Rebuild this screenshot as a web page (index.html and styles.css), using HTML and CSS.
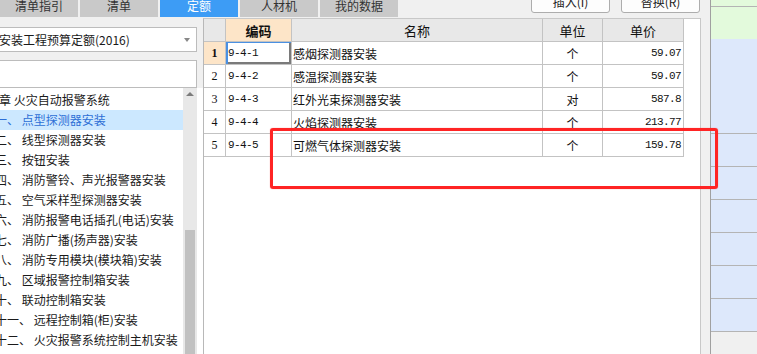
FILE: index.html
```html
<!DOCTYPE html>
<html lang="zh-CN">
<head>
    <meta charset="UTF-8">
    <meta name="viewport" content="width=device-width, initial-scale=1.0">
    <title>定额查询</title>
    <link rel="stylesheet" href="styles.css">
</head>
<body>
    <div class="app">
        <div class="main">
            <div class="topbar">
                <div class="tabs">
                    <div class="tab">清单指引</div>
                    <div class="tab">清单</div>
                    <div class="tab active">定额</div>
                    <div class="tab">人材机</div>
                    <div class="tab">我的数据</div>
                </div>
                <div class="actions">
                    <button class="btn">插入(I)</button>
                    <button class="btn">替换(R)</button>
                </div>
            </div>

            <div class="content">
                <div class="left">
                    <div class="select">
                        <span class="select-text">安装工程预算定额(2016)</span>
                        <span class="caret"></span>
                    </div>
                    <div class="search"></div>
                    <div class="tree">
                        <ul class="tree-list">
                            <li class="node chapter">第四章 火灾自动报警系统</li>
                            <li class="node active">一、 点型探测器安装</li>
                            <li class="node">二、 线型探测器安装</li>
                            <li class="node">三、 按钮安装</li>
                            <li class="node">四、 消防警铃、声光报警器安装</li>
                            <li class="node">五、 空气采样型探测器安装</li>
                            <li class="node">六、 消防报警电话插孔(电话)安装</li>
                            <li class="node">七、 消防广播(扬声器)安装</li>
                            <li class="node">八、 消防专用模块(模块箱)安装</li>
                            <li class="node">九、 区域报警控制箱安装</li>
                            <li class="node">十、 联动控制箱安装</li>
                            <li class="node">十一、 远程控制箱(柜)安装</li>
                            <li class="node">十二、 火灾报警系统控制主机安装</li>
                        </ul>
                        <div class="scrollbar">
                            <span class="arrow-up"></span>
                            <span class="thumb"></span>
                        </div>
                    </div>
                </div>

                <div class="grid-panel">
                    <div class="grid">
                        <div class="cell head corner"></div>
                        <div class="cell head code-head">编码</div>
                        <div class="cell head">名称</div>
                        <div class="cell head">单位</div>
                        <div class="cell head">单价</div>

                        <div class="cell num current">1</div>
                        <div class="cell code selected">9-4-1</div>
                        <div class="cell name">感烟探测器安装</div>
                        <div class="cell unit">个</div>
                        <div class="cell price">59.07</div>

                        <div class="cell num">2</div>
                        <div class="cell code">9-4-2</div>
                        <div class="cell name">感温探测器安装</div>
                        <div class="cell unit">个</div>
                        <div class="cell price">59.07</div>

                        <div class="cell num">3</div>
                        <div class="cell code">9-4-3</div>
                        <div class="cell name">红外光束探测器安装</div>
                        <div class="cell unit">对</div>
                        <div class="cell price">587.8</div>

                        <div class="cell num">4</div>
                        <div class="cell code">9-4-4</div>
                        <div class="cell name">火焰探测器安装</div>
                        <div class="cell unit">个</div>
                        <div class="cell price">213.77</div>

                        <div class="cell num">5</div>
                        <div class="cell code">9-4-5</div>
                        <div class="cell name">可燃气体探测器安装</div>
                        <div class="cell unit">个</div>
                        <div class="cell price">159.78</div>
                    </div>
                </div>
            </div>
        </div>

        <div class="side">
            <div class="side-row green thin"></div>
            <div class="side-row green top"></div>
            <div class="side-row blue first"></div>
            <div class="side-row blue"></div>
            <div class="side-row blue"></div>
            <div class="side-row blue"></div>
            <div class="side-row blue"></div>
            <div class="side-row blue"></div>
            <div class="side-row blue"></div>
        </div>

        <div class="mark"></div>
    </div>
</body>
</html>
```

FILE: styles.css
```css
* {
    box-sizing: border-box;
}

body {
    margin: 0;
    font-family: "Noto Sans CJK SC", "Noto Sans", sans-serif;
    font-size: 12px;
    color: #1a1a1a;
    background-color: #f0f0f0;
    overflow: hidden;
}

.app {
    position: relative;
    display: flex;
    width: 757px;
    height: 354px;
    overflow: hidden;
}

.main {
    width: 710px;
    padding-right: 9px;
    display: flex;
    flex-direction: column;
}

/* top tabs */
.topbar {
    height: 18px;
    display: flex;
    justify-content: space-between;
}

.tabs {
    display: flex;
    gap: 2px;
    margin-top: -6px;
}

.tab {
    width: 78px;
    height: 23px;
    line-height: 23px;
    text-align: center;
    background-color: #c9c9c9;
    color: #333;
}

.tab.active {
    background-color: #3d9cf5;
    color: white;
}

.actions {
    display: flex;
    gap: 11px;
    margin-top: -10px;
    margin-right: 1px;
}

.btn {
    width: 79px;
    height: 23px;
    padding: 0;
    font-family: inherit;
    font-size: 12px;
    color: #222;
    background-color: #fdfdfd;
    border: 1px solid #adadad;
    border-radius: 3px;
}

/* content */
.content {
    flex: 1;
    display: flex;
    min-height: 0;
}

.left {
    width: 203px;
    display: flex;
    flex-direction: column;
    overflow: hidden;
}

.select {
    height: 25px;
    margin-top: 9px;
    margin-right: 6px;
    margin-left: -1px;
    display: flex;
    align-items: center;
    justify-content: space-between;
    background-color: white;
    border: 1px solid #bcbcbc;
    padding-right: 6px;
}

.select-text {
    margin-left: -1px;
    white-space: nowrap;
}

.caret {
    border-left: 3.5px solid transparent;
    border-right: 3.5px solid transparent;
    border-top: 4px solid #888;
}

.search {
    height: 28px;
    margin-top: 8px;
    margin-right: 6px;
    margin-left: -1px;
    background-color: white;
    border: 1px solid #bcbcbc;
}

.tree {
    flex: 1;
    display: flex;
    background-color: white;
    padding-right: 6px;
    min-height: 0;
}

.tree-list {
    flex: 1;
    list-style: none;
    margin: 0;
    padding: 2px 0 0 0;
    overflow: hidden;
}

.node {
    height: 20px;
    line-height: 20px;
    white-space: nowrap;
    text-indent: -5px;
}

.node.chapter {
    text-indent: -25px;
}

.node.active {
    background-color: #cce8ff;
    color: #2d6fd6;
}

.scrollbar {
    width: 14px;
    background-color: #e8e8e8;
    display: flex;
    flex-direction: column;
    align-items: center;
}

.arrow-up {
    margin-top: 4px;
    border-left: 4px solid transparent;
    border-right: 4px solid transparent;
    border-bottom: 4px solid #7c7c7c;
}

.thumb {
    width: 10px;
    flex: 1;
    margin-top: 134px;
    background-color: #c1c1c1;
}

/* grid */
.grid-panel {
    width: 498px;
    background-color: white;
    border-top: 1px solid #c8c8c8;
    border-left: 1px solid #b8b8b8;
    border-right: 1px solid #c8c8c8;
}

.grid {
    display: grid;
    grid-template-columns: 22px 66px 251px 60px 81px;
    grid-auto-rows: 23px;
}

.cell {
    border-right: 1px solid #c3c3c3;
    border-bottom: 1px solid #c3c3c3;
    display: flex;
    align-items: center;
    white-space: nowrap;
    color: #111;
}

.cell.head {
    justify-content: center;
    background-color: #e8e8e8;
    font-size: 13px;
}

.cell.code-head {
    background-color: #fde5c8;
    font-weight: bold;
}

.cell.num {
    justify-content: center;
    font-family: "Liberation Serif", serif;
    font-size: 12px;
}

.cell.num.current {
    background-color: #fde5c8;
    font-weight: bold;
}

.cell.code {
    padding-left: 2px;
    font-family: "Liberation Mono", monospace;
    font-size: 11px;
    letter-spacing: -0.6px;
}

.cell.code.selected {
    box-shadow: inset 2px 1px 0 #4a90e2, inset -2px -2px 0 #7a7a7a;
}

.cell.name {
    padding-left: 1px;
}

.cell.unit {
    justify-content: center;
}

.cell.price {
    justify-content: flex-end;
    padding-right: 2px;
    font-family: "Liberation Mono", monospace;
    font-size: 11px;
    letter-spacing: -0.6px;
}

/* right strip */
.side {
    width: 47px;
    border-left: 1px solid #a0a0a0;
}

.side-row {
    height: 33px;
    border-bottom: 1px solid #b4b4b4;
}

.side-row.green {
    background-color: #e3fadc;
}

.side-row.green.thin {
    height: 7px;
}

.side-row.green.top {
    height: 32px;
    border-bottom: none;
}

.side-row.blue {
    background-color: #dde8fb;
}

.side-row.blue.first {
    height: 95px;
}

/* red annotation box */
.mark {
    position: absolute;
    left: 270px;
    top: 128px;
    width: 448px;
    height: 61px;
    border: 3px solid #ff2424;
    border-radius: 3px;
    box-shadow: 0 0 1px rgba(255, 0, 0, 0.6);
}
```
